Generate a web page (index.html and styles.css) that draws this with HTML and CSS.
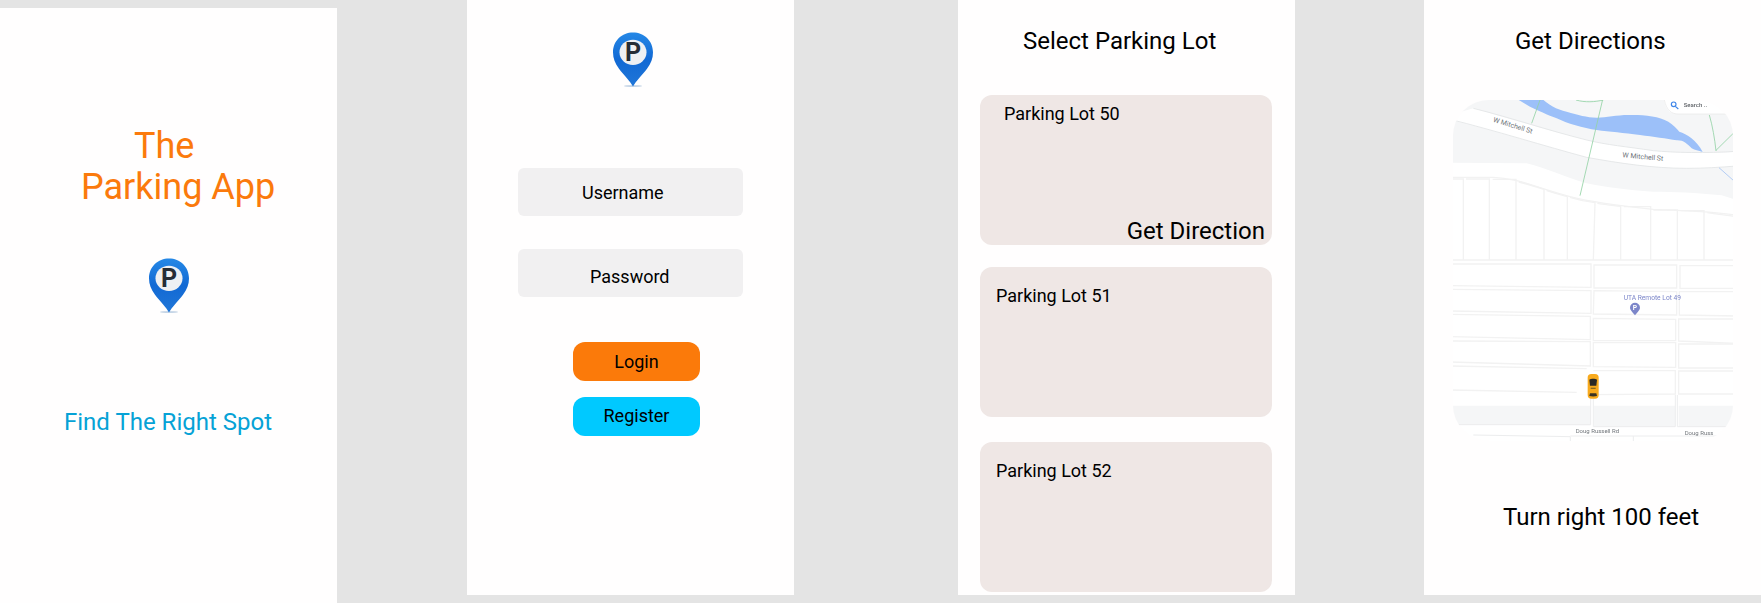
FILE: index.html
```html
<!DOCTYPE html>
<html lang="en">
<head>
<meta charset="utf-8">
<title>The Parking App</title>
<link rel="stylesheet" href="styles.css">
</head>
<body>
<svg class="defs" width="0" height="0" aria-hidden="true">
  <defs>
    <linearGradient id="pinfill" x1="0" y1="0" x2="0" y2="1">
      <stop offset="0" stop-color="#2588e6"/>
      <stop offset="0.5" stop-color="#1269d4"/>
      <stop offset="1" stop-color="#2076d8"/>
    </linearGradient>
    <symbol id="pin" viewBox="0 0 40 54" preserveAspectRatio="none">
      <ellipse cx="20" cy="53" rx="9" ry="1" fill="#9fb9d6" opacity=".6"/>
      <path d="M20 53.500C17 48 11 42.500 6 36C2 31 0 26 0 20C0 8.500 9 .5 20 .5S40 8.500 40 20C40 26 38 31 34 36C29 42.500 23 48 20 53.500Z" fill="url(#pinfill)"/>
      <ellipse cx="20" cy="20" rx="13.500" ry="12.500" fill="#eef0f3"/>
      <text x="20" y="28.800" text-anchor="middle" class="pin-p">P</text>
    </symbol>
  </defs>
</svg>
<main class="board">
  <section class="phone phone-splash">
    <h1 class="app-title"><span class="app-title-the">The</span><span class="app-title-name">Parking App</span></h1>
    <svg class="pin pin-splash" aria-hidden="true"><use href="#pin"/></svg>
    <p class="tagline">Find The Right Spot</p>
  </section>

  <section class="phone phone-login">
    <svg class="pin pin-login" aria-hidden="true"><use href="#pin"/></svg>
    <div class="field field-user">Username</div>
    <div class="field field-pass">Password</div>
    <button class="btn btn-login">Login</button>
    <button class="btn btn-register">Register</button>
  </section>

  <section class="phone phone-lots">
    <h2 class="screen-title lots-title">Select Parking Lot</h2>
    <div class="lot lot-first">
      <span class="lot-name lot-name-first">Parking Lot 50</span>
      <span class="lot-action">Get Direction</span>
    </div>
    <div class="lot lot-second"><span class="lot-name">Parking Lot 51</span></div>
    <div class="lot lot-third"><span class="lot-name">Parking Lot 52</span></div>
  </section>

  <section class="phone phone-map">
    <h2 class="screen-title map-title">Get Directions</h2>
    <svg class="map" viewBox="99 60 840 1023" aria-label="Map">
      <g class="map-art">
      <rect x="90" y="50" width="860" height="1043" fill="#fff"/>
      <path d="M90 50H950V215C860 220 760 218 700 212C620 200 560 195 500 180C380 150 260 115 160 85L90 105Z" fill="#f5f6f7"/>
      <path d="M90 120C220 150 380 200 500 232C600 250 700 265 800 265C850 265 900 262 950 258V360L905 346C830 338 760 335 700 335C620 330 560 322 500 310C430 290 380 265 320 250L90 248Z" fill="#f5f6f7"/>
      <path d="M160 85C280 115 380 150 500 180C560 195 620 200 700 212C760 218 860 220 950 214M90 118C220 150 380 200 500 232C600 250 700 265 800 265C850 265 900 262 950 258" fill="none" stroke="#e2e4e6" stroke-width="2.500"/>
      <path d="M280 50H360C385 75 410 88 440 95C475 105 500 112 530 113C560 113 590 105 625 105C670 104 715 108 745 125C760 135 770 145 778 155C800 162 830 180 848 216C835 212 825 211 815 205C800 190 790 180 770 181C740 176 700 170 660 165C610 158 570 156 530 150C490 145 440 130 410 115C385 105 350 90 330 80Z" fill="#9cc0f9"/>
      <g fill="none" stroke="#93d2a5" stroke-width="2.500">
        <path d="M550 50L480 347M360 60L335 130M468 60C495 68 525 66 550 60M868 105C878 140 884 175 888 213M888 211L950 150"/>
      </g>
      <path d="M897 263L950 310" fill="none" stroke="#a6c4f4" stroke-width="2.500"/>
      <g fill="none" stroke="#f2f2f2" stroke-width="4">
        <path d="M90 292H220C290 294 340 320 450 350C520 368 600 378 700 388C780 392 860 392 950 406"/>
        <path d="M90 297H130V540M138 297H208V540M218 298H288V540M296 306C320 312 350 320 372 328V540M380 332C400 338 425 345 442 350V540M450 352C475 360 500 365 525 368L520 540M532 370C555 373 580 377 602 379V540M612 380H692V540M700 390H772V540M782 392H852V540M862 398C890 402 915 405 950 410V540"/>
        <path d="M90 540H950"/>
        <path d="M90 552H513V622L90 617"/>
        <path d="M90 628L513 632V700L90 693"/>
        <path d="M90 703L511 709V779L90 770"/>
        <path d="M90 783L511 785V858L90 846"/>
        <path d="M90 858L500 866M90 930L470 937"/>
        <path d="M522 555H770V624H522Z"/>
        <path d="M522 632L770 635V705L520 702Z"/>
        <path d="M520 715L767 718V782H520Z"/>
        <path d="M520 788H767V862L520 860Z"/>
        <path d="M520 872H766V942L520 944"/>
        <path d="M950 557H780V625H950"/>
        <path d="M950 635H778V705L950 708"/>
        <path d="M950 717H776V783L950 790"/>
        <path d="M950 792H776V864H950"/>
        <path d="M950 873H776V942H950"/>
      </g>
      <path d="M90 977H512V1036L90 1034ZM522 977H766V1040H522ZM776 977H950V1040H776Z" fill="#f5f6f7"/>
      <path d="M105 1034H512V945M520 945V1040H766V945M772 945V1040H950M160 1065L451 1070V1090M451 1068H950M640 1068V1090" fill="none" stroke="#ecedee" stroke-width="3"/>
      <text class="map-road" transform="translate(218 125) rotate(17)">W Mitchell St</text>
      <text class="map-road" transform="translate(607 232) rotate(5)">W Mitchell St</text>
      <text class="map-road map-road-small" x="467" y="1060">Doug Russell Rd</text>
      <text class="map-road map-road-small" x="794" y="1064">Doug Russ</text>
      <text class="map-lot" x="611" y="661">UTA Remote Lot 49</text>
      <path d="M645 706C638 696 630 690 630 683A15 15 0 1 1 660 683C660 690 652 696 645 706Z" fill="#7c86c9"/>
      <text class="map-lot-p" x="645" y="691" text-anchor="middle">P</text>
      <rect x="503" y="882" width="33" height="74" rx="11" fill="#f8aa1d"/>
      <path d="M508 899C513 895 526 895 531 899L529 917H510Z" fill="#2a2926"/>
      <rect x="512" y="923" width="15" height="4" fill="#8a6a20"/>
      <path d="M510 940H529L531 948C525 950 514 950 508 948Z" fill="#3a3324"/>
      <path d="M730 50H950V102H775C745 102 735 85 730 50Z" fill="#fff"/>
      <path d="M733 60C740 92 755 102 775 102H950" fill="none" stroke="#e7e7e7" stroke-width="2"/>
      <circle cx="761" cy="73" r="7" fill="none" stroke="#3f86e8" stroke-width="3.500"/>
      <path d="M766 79L775 87" stroke="#3f86e8" stroke-width="3.500"/>
      <text class="map-search" x="791" y="80">Search ..</text>
      </g>
    </svg>
    <p class="turn">Turn right 100 feet</p>
  </section>
</main>
</body>
</html>
```

FILE: styles.css
```css
* { box-sizing: border-box; }
html, body { margin: 0; height: 100%; }
body {
  background: #e4e4e4;
  font-family: Roboto, "Liberation Sans", sans-serif;
  color: #000;
  overflow: hidden;
}
.defs { display: block; height: 0; }
.board {
  display: flex;
  width: 1761px;
  height: 603px;
  align-items: flex-start;
}
.phone {
  display: flex;
  flex-direction: column;
  background: #fffefe;
  width: 337px;
  height: 595px;
  flex: none;
}
.phone-splash { margin-top: 8px; padding-top: 117px; }
.phone-login { width: 327px; margin-left: 130px; padding-top: 32px; }
.phone-lots { margin-left: 164px; }
.phone-map { margin-left: 129px; }

.app-title {
  margin: 0;
  font-size: 36px;
  font-weight: 400;
  line-height: 42px;
  color: #fb7a0c;
  display: flex;
  flex-direction: column;
  align-items: flex-start;
}
.app-title-the { margin-left: 134px; }
.app-title-name { margin-left: 81px; margin-top: -1px; }
.pin { display: block; flex: none; }
.pin-splash { width: 40px; height: 55px; margin: 50px 0 0 149px; }
.pin-login { width: 40px; height: 55px; margin-left: 146px; }
.pin-p {
  font-family: Roboto, sans-serif;
  font-weight: 700;
  font-size: 25px;
  fill: #262d36;
}
.tagline {
  margin: 95px 0 0 64px;
  font-size: 24px;
  line-height: 28px;
  color: #06a2d6;
}

.field {
  width: 225px;
  height: 48px;
  margin-left: 51px;
  background: #f1f0f1;
  border-radius: 6px;
  font-size: 18px;
  line-height: 21px;
}
.field-user { margin-top: 81px; padding: 14px 0 0 64px; }
.field-pass { margin-top: 33px; padding: 17px 0 0 72px; }
.btn {
  display: block;
  width: 127px;
  height: 39px;
  margin-left: 106px;
  padding: 0;
  border: 0;
  border-radius: 12px;
  font: 400 18px/21px Roboto, sans-serif;
  color: #000;
  text-align: center;
}
.btn-login { margin-top: 45px; background: #fb7a0a; }
.btn-register { margin-top: 16px; background: #00c9ff; padding-bottom: 2px; }

.screen-title {
  margin: 0;
  font-size: 24px;
  font-weight: 400;
  line-height: 28px;
}
.lots-title { margin: 27px 0 0 65px; }
.map-title { margin: 27px 0 0 91px; }
.lot {
  position: relative;
  width: 292px;
  height: 150px;
  margin-left: 22px;
  background: #efe7e5;
  border-radius: 12px;
  flex: none;
}
.lot-first { margin-top: 40px; }
.lot-second { margin-top: 22px; padding: 18px 0 0 16px; }
.lot-third { margin-top: 25px; padding: 18px 0 0 16px; }
.lot-name { display: block; font-size: 18px; line-height: 21px; }
.lot-name-first { padding: 8px 0 0 24px; }
.lot-action {
  position: absolute;
  right: 7px;
  bottom: 0;
  font-size: 24px;
  line-height: 28px;
}

.map {
  display: block;
  width: 280px;
  height: 341px;
  margin: 45px 0 0 29px;
  border-radius: 36px;
  flex: none;
}
.map-art { filter: blur(1.2px); }
.map-road { font: 400 21px Roboto, sans-serif; fill: #70757a; }
.map-road-small { font-size: 18px; }
.map-lot { font: 400 20px Roboto, sans-serif; fill: #7c86c9; }
.map-lot-p { font: 700 20px Roboto, sans-serif; fill: #fff; }
.map-search { font: 500 18px Roboto, sans-serif; fill: #5f6368; }
.turn {
  margin: 62px 0 0 79px;
  font-size: 24px;
  line-height: 28px;
}
```
